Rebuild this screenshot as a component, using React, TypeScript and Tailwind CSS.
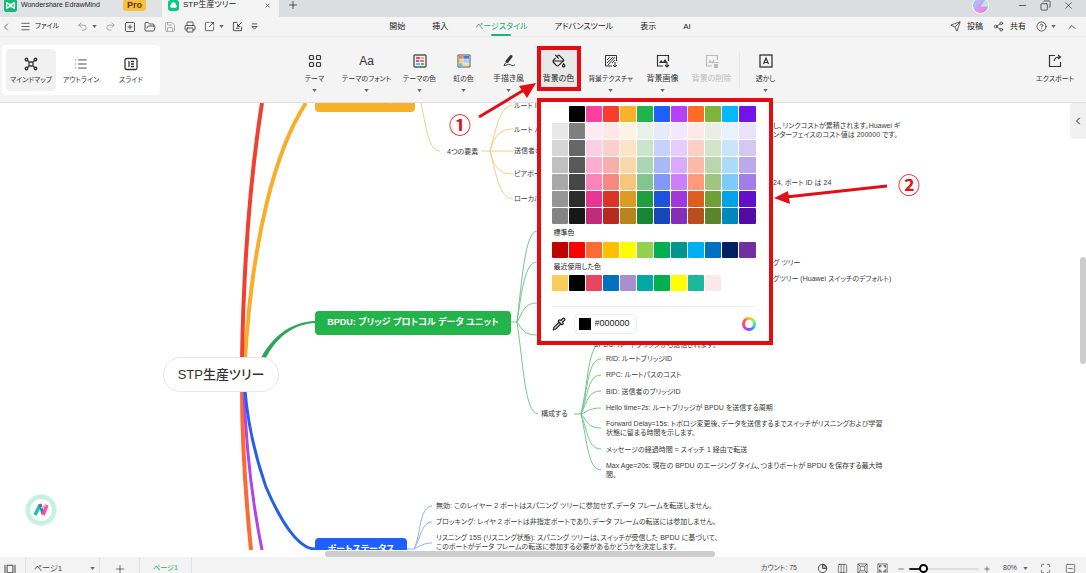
import { useState } from "react"
import type { ReactNode } from "react"
import {
    ChevronLeft, ChevronUp, Menu, Undo2, Redo2, SquarePlus, FolderOpen, Save, Printer,
    SquareArrowOutUpRight, Send, Share2, CircleHelp, X, Minus, Plus, Copy, PaintBucket,
    Pipette, Columns3, Maximize, SquareMinus, List
} from "lucide-react"

const themeColors: string[][] = [
    ["#ffffff", "#000000", "#ff40a0", "#fa3c2d", "#f8b32a", "#22b34b", "#1f5ffb", "#b940fb", "#fd6b25", "#80b33c", "#00b8fd", "#7412ea"],
    ["#e8e8e8", "#7f7f7f", "#ffeaf2", "#fee8e6", "#fef3e4", "#e8f2e8", "#e6eafd", "#f4e8fe", "#fdeae6", "#e8f0e4", "#e6f3fe", "#e9e2f8"],
    ["#d6d6d6", "#666666", "#fdcfe2", "#fccfcd", "#fce4c8", "#cbe5cc", "#c8d1fc", "#e6cdfd", "#fdd0c6", "#d3e4c8", "#c8e5fd", "#d5c8f5"],
    ["#c0c0c0", "#595959", "#fdadd0", "#f9aeaa", "#f9d8ac", "#acd6b1", "#aab8fa", "#d9aafd", "#fdb8a8", "#bad6ae", "#abdafd", "#bba9ee"],
    ["#a8a8a8", "#464646", "#fc84b8", "#f98880", "#f6c67c", "#84c48d", "#8199f9", "#ca80fb", "#fd9a7c", "#a2c483", "#7ccbfb", "#a07fea"],
    ["#969696", "#2c2c2c", "#e63692", "#dc3328", "#d99d22", "#209e41", "#1c55dc", "#a237dc", "#dd5f20", "#70a035", "#00a3e6", "#650fc8"],
    ["#858585", "#171717", "#bf2d7a", "#b72a21", "#b6831c", "#1a8437", "#1746b8", "#862eb8", "#b94f1b", "#5d842c", "#0088be", "#550aa8"]
]

const standardColors = ["#c00000", "#fe0000", "#fb6b33", "#ffc000", "#ffff00", "#92d050", "#00b050", "#00958f", "#00aff0", "#0070c0", "#002060", "#7030a0"]
const recentColors = ["#f9cc59", "#000000", "#e84560", "#0070c0", "#a890cc", "#00a9a5", "#00b050", "#ffff00", "#1db89c", "#fce8ea"]

// small texts on the canvas, one class string per node
const topics: { place: string, text: string }[] = [
    { place: "left-[514px] top-[-2px]", text: "ルート ID" },
    { place: "left-[514px] top-[22px]", text: "ルート パス" },
    { place: "left-[514px] top-[43px]", text: "送信者のID" },
    { place: "left-[514px] top-[66px]", text: "ピアポート" },
    { place: "left-[514px] top-[91px]", text: "ローカルID" },
    { place: "left-[447px] top-[44px]", text: "4つの要素" },
    { place: "left-[541px] top-[306px]", text: "構成する" },
    { place: "left-[594px] top-[237px]", text: "BPDU: ルートブリッジから送信されます。" },
    { place: "left-[606px] top-[251px]", text: "RID: ルートブリッジID" },
    { place: "left-[606px] top-[267px]", text: "RPC: ルートパスのコスト" },
    { place: "left-[606px] top-[284px]", text: "BID: 送信者のブリッジID" },
    { place: "left-[606px] top-[300px]", text: "Hello time=2s: ルートブリッジが BPDU を送信する周期" },
    { place: "left-[606px] top-[316px]", text: "Forward Delay=15s: トポロジ変更後、データを送信するまでスイッチがリスニングおよび学習\n状態に留まる時間を示します。" },
    { place: "left-[606px] top-[342px]", text: "メッセージの経過時間 = スイッチ 1 経由で転送" },
    { place: "left-[606px] top-[358px]", text: "Max Age=20s: 現在の BPDU のエージング タイム、つまりポートが BPDU を保存する最大時\n間。" },
    { place: "left-[436px] top-[398px]", text: "無効: このレイヤー 2 ポートはスパニング ツリーに参加せず、データ フレームを転送しません。" },
    { place: "left-[436px] top-[414px]", text: "ブロッキング: レイヤ 2 ポートは非指定ポートであり、データ フレームの転送には参加しません。" },
    { place: "left-[436px] top-[430px]", text: "リスニング 15S (リスニング状態): スパニング ツリーは、スイッチが受信した BPDU に基づいて、\nこのポートがデータ フレームの転送に参加する必要があるかどうかを決定します。" },
    { place: "left-[773px] top-[18px]", text: "し、リンクコストが累積されます。Huawei ギ\nンターフェイスのコスト値は 200000 です。" },
    { place: "left-[773px] top-[75px]", text: "24, ポート ID は 24" },
    { place: "left-[773px] top-[155px]", text: "グ ツリー" },
    { place: "left-[773px] top-[171px]", text: "グツリー (Huawei スイッチのデフォルト)" }
]

const Caret = () => (
    <svg viewBox="0 0 6 4" className="h-[3px] w-[5px] shrink-0 fill-[#666]"><path d="M0 0h6L3 4z" /></svg>
)

const TitleBar = () => (
    <div className="flex h-[17px] shrink-0 items-end overflow-hidden bg-[#dadee1]">
        <div className="flex h-6 w-[162px] items-center bg-[#e0e3e6] pl-1">
            <svg viewBox="0 0 24 24" className="size-[13px]">
                <rect width="24" height="24" rx="5" fill="#16b979" />
                <path d="M5 7v10l4-2 3-5 3 5 4 2V7l-4 2-3 5-3-5z" fill="none" stroke="#fff" strokeWidth="2.5" strokeLinejoin="round" />
            </svg>
            <span className="ml-1 text-[7px]">Wondershare EdrawMind</span>
            <span className="mr-4 ml-auto rounded-[3px] bg-[#fcbe3d] px-1 text-[9px] leading-3 font-bold text-[#5b3a08]">Pro</span>
        </div>
        <div className="flex h-6 w-[117px] items-center rounded-t bg-[#f4f4f4] pl-1.5">
            <svg viewBox="0 0 24 24" className="size-[11px]">
                <rect width="24" height="24" rx="6" fill="#08c988" />
                <path d="M7 17a4 4 0 0 1 0-7 5 5 0 0 1 10 0 4 4 0 0 1 0 7z" fill="#fff" />
            </svg>
            <span className="ml-1 text-[8px]">STP生産ツリー</span>
            <button aria-label="タブを閉じる" className="mr-2 ml-auto"><X className="size-[7px]" /></button>
        </div>
        <button aria-label="新しいタブ" className="flex h-6 items-center pl-2"><Plus className="size-3" strokeWidth={1.5} /></button>
        <div className="ml-auto flex h-6 items-center pr-3">
            <svg viewBox="0 0 18 18" className="mr-7 size-[17px]">
                <defs>
                    <linearGradient id="avatar" x1="0" x2="1" y1="0" y2="1">
                        <stop offset="0" stopColor="#8fe3ff" />
                        <stop offset="0.45" stopColor="#c9a3f5" />
                        <stop offset="0.7" stopColor="#f08ad8" />
                        <stop offset="1" stopColor="#6fb4ff" />
                    </linearGradient>
                </defs>
                <circle cx="9" cy="9" r="8.5" fill="url(#avatar)" stroke="#fff" />
                <path d="M9 10l5-7a8 8 0 0 1 3 7z" fill="#b6fbe0" opacity="0.8" />
            </svg>
            <div className="flex items-center gap-3">
                <button aria-label="最小化"><Minus className="size-[11px]" strokeWidth={1.5} /></button>
                <button aria-label="元のサイズ"><Copy className="size-[11px] -scale-x-100" strokeWidth={1.5} /></button>
                <button aria-label="閉じる"><X className="size-[11px]" strokeWidth={1.5} /></button>
            </div>
        </div>
    </div>
)

const MenuRow = () => (
    <div className="grid h-5 shrink-0 grid-cols-[1fr_auto_1fr] items-center border-b border-[#ececec] text-[8px]">
        <div className="flex items-center gap-2 text-[#444]">
            <button aria-label="戻る"><ChevronLeft className="size-3" strokeWidth={1.5} /></button>
            <button className="flex items-center gap-1 pr-1 text-[7px] text-[#222]"><Menu className="size-[11px]" strokeWidth={1.5} />ファイル</button>
            <button aria-label="元に戻す" className="flex items-center gap-1 pl-1.5 text-[#888]"><Undo2 className="size-[11px]" strokeWidth={1.5} /><Caret /></button>
            <button aria-label="やり直し" className="text-[#888]"><Redo2 className="size-[11px]" strokeWidth={1.5} /></button>
            <button aria-label="新規"><SquarePlus className="size-3" strokeWidth={1.8} /></button>
            <button aria-label="開く"><FolderOpen className="size-3" strokeWidth={1.8} /></button>
            <button aria-label="保存" className="text-[#999]"><Save className="size-3" strokeWidth={1.5} /></button>
            <button aria-label="印刷"><Printer className="size-3" strokeWidth={1.8} /></button>
            <button aria-label="書き出し" className="flex items-center gap-1"><SquareArrowOutUpRight className="size-[11px]" strokeWidth={1.8} /><Caret /></button>
            <button aria-label="取り込み">
                <svg viewBox="0 0 24 24" className="size-[11px] fill-none stroke-current stroke-2">
                    <path d="M12 3H3v18h18v-9M21 3l-9 9m0-6v6h6M8 16h8" />
                </svg>
            </button>
            <button aria-label="その他">
                <svg viewBox="0 0 8 8" className="size-[7px] fill-none stroke-current"><path d="M1 1h6M1 4h6L4 7z" /></svg>
            </button>
        </div>
        <nav className="flex h-full items-center gap-[27px] pr-1.5">
            <button>開始</button>
            <button>挿入</button>
            <button className="relative flex h-full items-center text-[#10a86c]">
                ページスタイル
                <span className="absolute bottom-0 left-1/2 h-[2px] w-5 -translate-x-1/2 rounded bg-[#1fb37b]" />
            </button>
            <button>アドバンスツール</button>
            <button>表示</button>
            <button>AI</button>
        </nav>
        <div className="flex items-center justify-end gap-2.5 pr-2">
            <button className="flex items-center gap-1.5"><Send className="size-[11px]" strokeWidth={1.5} />投稿</button>
            <button className="flex items-center gap-1.5"><Share2 className="size-[11px]" strokeWidth={1.5} />共有</button>
            <button aria-label="ヘルプ" className="flex items-center gap-1"><CircleHelp className="size-[11px]" strokeWidth={1.5} /><Caret /></button>
            <button aria-label="リボンを閉じる"><ChevronUp className="size-3" strokeWidth={1.5} /></button>
        </div>
    </div>
)

const Swatch = ({ color, onPick }: { color: string, onPick: (c: string) => void }) => (
    <button aria-label={color} onClick={() => onPick(color)} className="h-4 rounded-[1px]" style={{ backgroundColor: color }} />
)

const ColorPanel = () => {
    const [color, setColor] = useState("#000000");

    return (
        <div className="absolute top-[52px] left-0 z-20 w-[236px] border-4 border-[#e60b12] bg-white pt-1 pr-[13px] pl-[11px] text-left">
            <div className="grid grid-cols-12 gap-px">
                {themeColors.flat().map((c, i) => <Swatch key={i} color={c} onPick={setColor} />)}
            </div>
            <p className="pl-0.5 text-[7px] leading-[18px]">標準色</p>
            <div className="grid grid-cols-12 gap-px">
                {standardColors.map(c => <Swatch key={c} color={c} onPick={setColor} />)}
            </div>
            <p className="pl-0.5 text-[7px] leading-[17px]">最近使用した色</p>
            <div className="grid grid-cols-12 gap-px">
                {recentColors.map(c => <Swatch key={c} color={c} onPick={setColor} />)}
            </div>
            <div className="mt-[15px] flex h-[35px] items-center border-t border-[#eee]">
                <button aria-label="スポイト">
                    <Pipette className="size-[14px] fill-[#333]/20 text-[#222]" />
                </button>
                <label className="ml-2 flex h-5 w-[63px] items-center gap-1 rounded border border-[#eee] pl-1">
                    <span className="size-3 shrink-0" style={{ backgroundColor: color }} />
                    <input aria-label="カラーコード" value={color} onChange={e => setColor(e.target.value)} className="w-10 text-[9px] outline-none" />
                </label>
                <button aria-label="その他の色" className="ml-auto flex size-[14px] items-center justify-center rounded-full bg-[conic-gradient(#ffc23c,#8ff05a,#35e0c4,#3f7bff,#b93cf5,#ff3f8e,#ff5a3c,#ffc23c)]">
                    <span className="size-2 rounded-full bg-white" />
                </button>
            </div>
        </div>
    )
}

const Tool = ({ label, size, caret = true, off = false, children }: { label: string, size: string, caret?: boolean, off?: boolean, children: ReactNode }) => (
    <button disabled={off} className={`${size} ${off ? "text-[#bbb]" : "text-[#333]"} flex flex-col items-center pt-[7px] whitespace-nowrap`}>
        <span className="flex h-4 items-center">{children}</span>
        <span className="mt-1 leading-3">{label}</span>
        {caret && <span className="mt-1"><Caret /></span>}
    </button>
)

const Ribbon = () => (
    <div className="relative z-10 grid h-[66px] shrink-0 grid-cols-[1fr_auto_1fr] border-b border-[#e0e0e0]">
        <div className="mt-2 ml-0.5 flex h-[50px] w-[158px] rounded bg-white p-1 text-[7px] text-[#333]">
            <button className="flex w-[50px] flex-col items-center gap-1 rounded bg-[#f1f1f1] pt-2">
                <svg viewBox="0 0 14 14" className="size-[14px] fill-none stroke-current stroke-[1.3]">
                    <rect x="5" y="5" width="4" height="4" rx="1" />
                    <path d="M5 5L3.500 3.500M9 5l1.500-1.500M5 9l-1.500 1.500M9 9l1.500 1.500" />
                    <circle cx="2.500" cy="2.500" r="1.300" /><circle cx="11.500" cy="2.500" r="1.300" />
                    <circle cx="2.500" cy="11.500" r="1.300" /><circle cx="11.500" cy="11.500" r="1.300" />
                </svg>
                マインドマップ
            </button>
            <button className="flex w-[50px] flex-col items-center gap-1 pt-2"><List className="size-[14px]" strokeWidth={1.5} />アウトライン</button>
            <button className="flex w-[50px] flex-col items-center gap-1 pt-2">
                <svg viewBox="0 0 14 14" className="size-[14px] fill-none stroke-current">
                    <rect x="1" y="1.5" width="12" height="11" rx="1.5" strokeWidth="1.3" />
                    <path d="M5 4v6M7 4.500h3M7 7h3M7 9.500h3" strokeWidth="1.3" />
                </svg>
                スライド
            </button>
        </div>
        <div className="flex pt-[9px] pr-1.5">
            <Tool label="テーマ" size="w-9 text-[7px]">
                <svg viewBox="0 0 14 14" className="size-[14px] fill-none stroke-current stroke-[1.2]">
                    <rect x="1.5" y="1.5" width="4" height="4" rx="1" /><rect x="8.5" y="1.5" width="4" height="4" rx="1" />
                    <rect x="1.5" y="8.5" width="4" height="4" rx="1" /><rect x="8.5" y="8.5" width="4" height="4" rx="1" />
                </svg>
            </Tool>
            <Tool label="テーマのフォント" size="w-[68px] text-[7px]"><span className="text-[12px]">Aa</span></Tool>
            <Tool label="テーマの色" size="w-[38px] text-[7px]">
                <svg viewBox="0 0 14 14" className="size-[14px] fill-none">
                    <rect x="1" y="1" width="12" height="12" rx="1" stroke="#555" strokeWidth="1.4" />
                    <path d="M3 4h4" stroke="#ff4b4b" strokeWidth="2" /><path d="M8 4h3" stroke="#ffb52e" strokeWidth="2" />
                    <path d="M3 7h3" stroke="#b24bff" strokeWidth="2" /><path d="M7 7h4" stroke="#ff5fae" strokeWidth="2" />
                    <path d="M3 10h4" stroke="#3fc8ff" strokeWidth="2" /><path d="M8 10h3" stroke="#43c96a" strokeWidth="2" />
                </svg>
            </Tool>
            <Tool label="虹の色" size="w-[50px] text-[7px]">
                <svg viewBox="0 0 14 14" className="size-[14px]">
                    <path d="M2 2h4v3H2z" fill="#ff7464" /><path d="M2 5h4v4H2z" fill="#ffc95e" /><path d="M2 9h4v3H2z" fill="#62c0f5" />
                    <path d="M6 2h6v3H6z" fill="#3f7fe0" /><path d="M6 5h6v4H6z" fill="#9bd0ff" /><path d="M6 9h6v3H6z" fill="#ffd98b" />
                    <path d="M1 1h12v12H1z" fill="none" stroke="#555" /><path d="M2 5h10M2 9h10M6 2v10" stroke="#fff" strokeWidth="0.5" />
                </svg>
            </Tool>
            <Tool label="手描き風" size="w-10 text-[8px]">
                <svg viewBox="0 0 14 14" className="size-[14px] fill-none stroke-current" strokeLinecap="round">
                    <path d="M9 2.500L5 7.500" strokeWidth="3" /><path d="M3.500 9L2 11.500c3 0 4-2 6-1s2 2 4.500.5" />
                </svg>
            </Tool>
            <div className="relative mx-2 h-[45px] w-11 border-4 border-[#e60b12] bg-[#e8e8e8]">
                <button className="flex w-9 flex-col items-center pt-[3px] text-[8px] whitespace-nowrap">
                    <span className="flex h-4 items-center"><PaintBucket className="size-[14px]" /></span>
                    <span className="mt-1 leading-3">背景の色</span>
                </button>
                <div className="absolute -top-1 -left-1"><ColorPanel /></div>
            </div>
            <Tool label="背景テクスチャ" size="w-11 text-[7px]">
                <svg viewBox="0 0 14 14" className="size-[14px] fill-none stroke-current">
                    <path d="M8 12H1.500V1.500h11V7" /><path d="M3 6l3-3M3 9l6-6M4 11l7-8M8 9l3-3M11 8v5m-2-2l2 2 2-2" />
                </svg>
            </Tool>
            <Tool label="背景画像" size="w-[60px] text-[8px]">
                <svg viewBox="0 0 14 14" className="size-[14px] fill-none stroke-current">
                    <path d="M7 12H1.500V1.500h11V7M11 8v5m-2-2l2 2 2-2" strokeWidth="1.2" /><path d="M3 9l2-3 2 2 2-3 2 3v1z" fill="currentColor" stroke="none" />
                </svg>
            </Tool>
            <Tool label="背景の削除" size="w-[38px] text-[8px]" caret={false} off>
                <svg viewBox="0 0 14 14" className="size-[14px] fill-none stroke-current">
                    <path d="M7 12H1.500V1.500h11V6" strokeWidth="1.2" /><path d="M3 9l2-3 2 2 2-3v4zM8 8h6v1H8zM9 10h4v4H9z" fill="currentColor" stroke="none" />
                </svg>
            </Tool>
            <span className="mx-2 mt-1.5 h-9 w-px bg-[#e6e6e6]" />
            <Tool label="透かし" size="w-9 text-[7px]">
                <svg viewBox="0 0 14 14" className="size-[14px] fill-none stroke-current">
                    <rect x="1" y="1" width="12" height="12" strokeWidth="1.3" /><path d="M4.500 10L7 4l2.500 6M5.500 8.500h3" strokeWidth="1.200" />
                </svg>
            </Tool>
        </div>
        <div className="flex justify-end pt-[9px] pr-3">
            <Tool label="エクスポート" size="w-[38px] text-[7px]" caret={false}>
                <svg viewBox="0 0 14 14" className="size-[14px] fill-none stroke-current">
                    <path d="M7 1.500H1.500v11h11V8M6 7c1-3 2-4 6-4M10 1l2.500 2L10 5" strokeWidth="1.200" />
                </svg>
            </Tool>
        </div>
    </div>
)

const Branches = () => (
    <svg viewBox="0 103 1086 447" className="absolute top-0 left-0 h-[447px] w-[1086px] fill-none">
        <path d="M306 103C275 150 252 240 245 360" stroke="#f8ae2a" strokeWidth="4" />
        <path d="M262 103C253 160 244 240 242 360" stroke="#f04030" strokeWidth="4" />
        <path d="M242 390C242 450 246 500 251 550" stroke="#fd6b35" strokeWidth="4" />
        <path d="M244 390C246 450 254 510 262 550" stroke="#b145e8" strokeWidth="3" />
        <path d="M245 390C249 440 262 475 266 487C280 520 298 549 315 549" stroke="#2560e8" strokeWidth="3" />
        <path d="M261 358C273 335 292 322 315 321V323C293 324 276 338 266 358z" fill="#2fa45a" stroke="none" />
        <g stroke="#f0cf80">
            <path d="M421 103C426 125 428 151 440 151M481 151h9M490 151h23M490 151C497 125 500 106 513 105M490 151C494 136 500 129 513 129M490 151C494 168 500 174 513 174M490 151C497 178 500 198 513 199" />
        </g>
        <g stroke="#74c690">
            <path d="M511 322h6M517 322C522 280 525 232 537 231M517 322C522 290 525 262 537 262M517 322C523 312 524 303 537 303M517 322C523 330 524 335 537 335M517 322C524 370 525 412 538 414" />
            <path d="M574 414h7M581 414C588 385 588 344 601 343M581 414C588 388 588 359 601 359M581 414C588 395 588 375 601 375M581 414C588 400 588 391 601 391M581 414C588 412 588 408 601 408M581 414C588 422 588 428 601 428M581 414C588 432 588 449 601 449M581 414C588 445 588 469 601 470" />
        </g>
        <path d="M407 549h7C421 535 419 507 432 506M414 549C421 538 421 523 432 522M414 549C420 546 424 543 432 543" stroke="#8fb0f5" />
    </svg>
)

const Canvas = () => (
    <main className="relative min-h-0 flex-1 overflow-hidden bg-white">
        <div className="absolute inset-x-0 top-0 bottom-[7px] overflow-hidden whitespace-pre">
            <Branches />
            {topics.map(t => (
                <p key={t.place} className={`${t.place} absolute text-[7px] leading-[9px] text-[#3a3a3a]`}>{t.text}</p>
            ))}
            <div className="absolute top-[-15px] left-[315px] flex h-6 w-[100px] items-center justify-center rounded-sm bg-[#f6b12a] text-[9px] font-bold text-white">STP 4つの要素</div>
            <div className="absolute top-[208px] left-[315px] flex h-6 w-[196px] items-center justify-center rounded-sm bg-[#22b34b] text-[9px] font-bold text-white">BPDU: ブリッジ プロトコル データ ユニット</div>
            <div className="absolute top-[435px] left-[315px] flex h-6 w-[92px] items-center justify-center rounded-sm bg-[#1f5ffb] text-[9px] font-bold text-white">ポートステータス</div>
            <div className="absolute top-[254px] left-[163px] flex h-[35px] w-[116px] items-center justify-center rounded-full border border-[#e8e8e8] bg-white text-[13px] font-medium text-[#333]">STP生産ツリー</div>
        </div>
        <button aria-label="AIアシスタント" className="absolute top-[392px] left-[26px] flex size-[30px] items-center justify-center rounded-full border-4 border-[#c5f1e2] bg-white ring-1 ring-[#def7ef]">
            <svg viewBox="0 0 16 16" className="size-4 fill-none">
                <path d="M2 13L7 3" stroke="#19c7a7" strokeWidth="3.500" /><path d="M7 2l3 10" stroke="#2f7fa0" strokeWidth="3" />
                <path d="M10 13l4-10" stroke="#f252a8" strokeWidth="3.500" /><path d="M8 6l5-3" stroke="#ff9dcb" strokeWidth="2" />
            </svg>
        </button>
        <button aria-label="パネルを開く" className="absolute top-0 right-0 flex h-9 w-4 items-center justify-center rounded-l bg-[#f1f1f1]"><ChevronLeft className="size-3" /></button>
        <div className="absolute top-[154px] right-0 h-[107px] w-1.5 rounded bg-[#cdcdcd]" />
        <div className="absolute bottom-0 left-[325px] h-1.5 w-[390px] rounded bg-[#cdcdcd]" />
    </main>
)

const StatusBar = () => {
    const [zoom, setZoom] = useState(16);

    return (
        <footer className="h-4 shrink-0 overflow-hidden bg-[#f3f3f3] text-[7px] text-[#444]">
            <div className="flex h-[23px] items-center">
                <button aria-label="ページ一覧" className="w-[25px] pl-1">
                    <svg viewBox="0 0 14 12" className="h-[10px] w-3 fill-none stroke-current"><path d="M3.500 1.500h7v9h-7zM1 1v10M13 1v10" strokeWidth="1.200" /></svg>
                </button>
                <label className="flex h-full w-[75px] items-center border-x border-[#e2e2e2] pr-1 pl-2">
                    <select aria-label="ページ" className="flex-1 appearance-none text-[8px] outline-none"><option>ページ1</option></select>
                    <Caret />
                </label>
                <button aria-label="ページを追加" className="flex h-full w-10 items-center justify-center border-r border-[#e2e2e2]"><Plus className="size-3" strokeWidth={1.5} /></button>
                <button className="h-full w-[52px] border-r border-[#e2e2e2] text-[#10a86c]">ページ1</button>
                <span className="ml-auto">カウント: 75</span>
                <div className="ml-5 flex items-center gap-[9px]">
                    <button aria-label="タイマー">
                        <svg viewBox="0 0 12 12" className="size-[11px] fill-none stroke-current"><circle cx="6" cy="6" r="4.500" /><path d="M6 1.500V6h4.500A4.500 4.500 0 0 0 6 1.500z" fill="currentColor" fillOpacity="0.4" /></svg>
                    </button>
                    <button aria-label="列表示"><Columns3 className="size-[11px]" strokeWidth={1.5} /></button>
                    <button aria-label="全体表示">
                        <svg viewBox="0 0 12 12" className="size-[11px] fill-none stroke-current"><path d="M1 1h10v10H1zM3.500 3.500h5v5h-5zM1 1l2.500 2.500M11 1L8.500 3.500M1 11l2.500-2.500M11 11L8.500 8.500" strokeWidth="0.800" /></svg>
                    </button>
                    <button aria-label="中央表示">
                        <svg viewBox="0 0 12 12" className="size-[11px] fill-none stroke-current"><path d="M1 1h10v10H1z" strokeWidth="0.800" /><path d="M3 5V3h2M7 3h2v2M9 7v2H7M5 9H3V7" strokeWidth="1.300" /></svg>
                    </button>
                    <button aria-label="縮小"><Minus className="size-2" /></button>
                </div>
                <input
                    type="range" aria-label="ズーム" min={0} max={100} value={zoom} onChange={e => setZoom(Number(e.target.value))}
                    className="mx-1 h-[2px] w-[70px] appearance-none rounded bg-[linear-gradient(90deg,#222_22%,#ddd_22%)] [&::-webkit-slider-thumb]:size-[9px] [&::-webkit-slider-thumb]:appearance-none [&::-webkit-slider-thumb]:rounded-full [&::-webkit-slider-thumb]:border-2 [&::-webkit-slider-thumb]:border-solid [&::-webkit-slider-thumb]:border-black [&::-webkit-slider-thumb]:bg-white"
                />
                <button aria-label="拡大"><Plus className="size-2" /></button>
                <button className="ml-3 flex items-center gap-1.5">80%<Caret /></button>
                <button aria-label="全画面" className="ml-3"><Maximize className="size-[11px]" strokeWidth={1.5} /></button>
                <button aria-label="閉じる" className="mr-2.5 ml-3.5"><SquareMinus className="size-[11px]" strokeWidth={1.5} /></button>
            </div>
        </footer>
    )
}

// numbered callouts and arrows drawn over the window
const Callouts = () => (
    <div className="pointer-events-none absolute inset-0 z-30 text-[22px] leading-6 font-bold text-[#d9161c]">
        <svg viewBox="0 0 1086 573" className="absolute top-0 left-0 h-[573px] w-[1086px] fill-[#e01016] stroke-[#e01016]">
            <path d="M479 117L524 90M887 186L786 197" strokeWidth="3" />
            <path d="M536 83L519 86L527 98zM774 198L788 191L790 204z" stroke="none" />
        </svg>
        <span className="absolute top-[114px] left-[449px]">①</span>
        <span className="absolute top-[174px] left-[898px]">②</span>
    </div>
)

const App = () => (
    <div lang="ja" className="relative flex h-screen flex-col overflow-hidden bg-[#f4f4f4] font-['Liberation_Sans','Noto_Sans_CJK_JP',sans-serif] text-[#222] [font-feature-settings:'palt']">
        <TitleBar />
        <MenuRow />
        <Ribbon />
        <Canvas />
        <StatusBar />
        <Callouts />
    </div>
)

export default App
